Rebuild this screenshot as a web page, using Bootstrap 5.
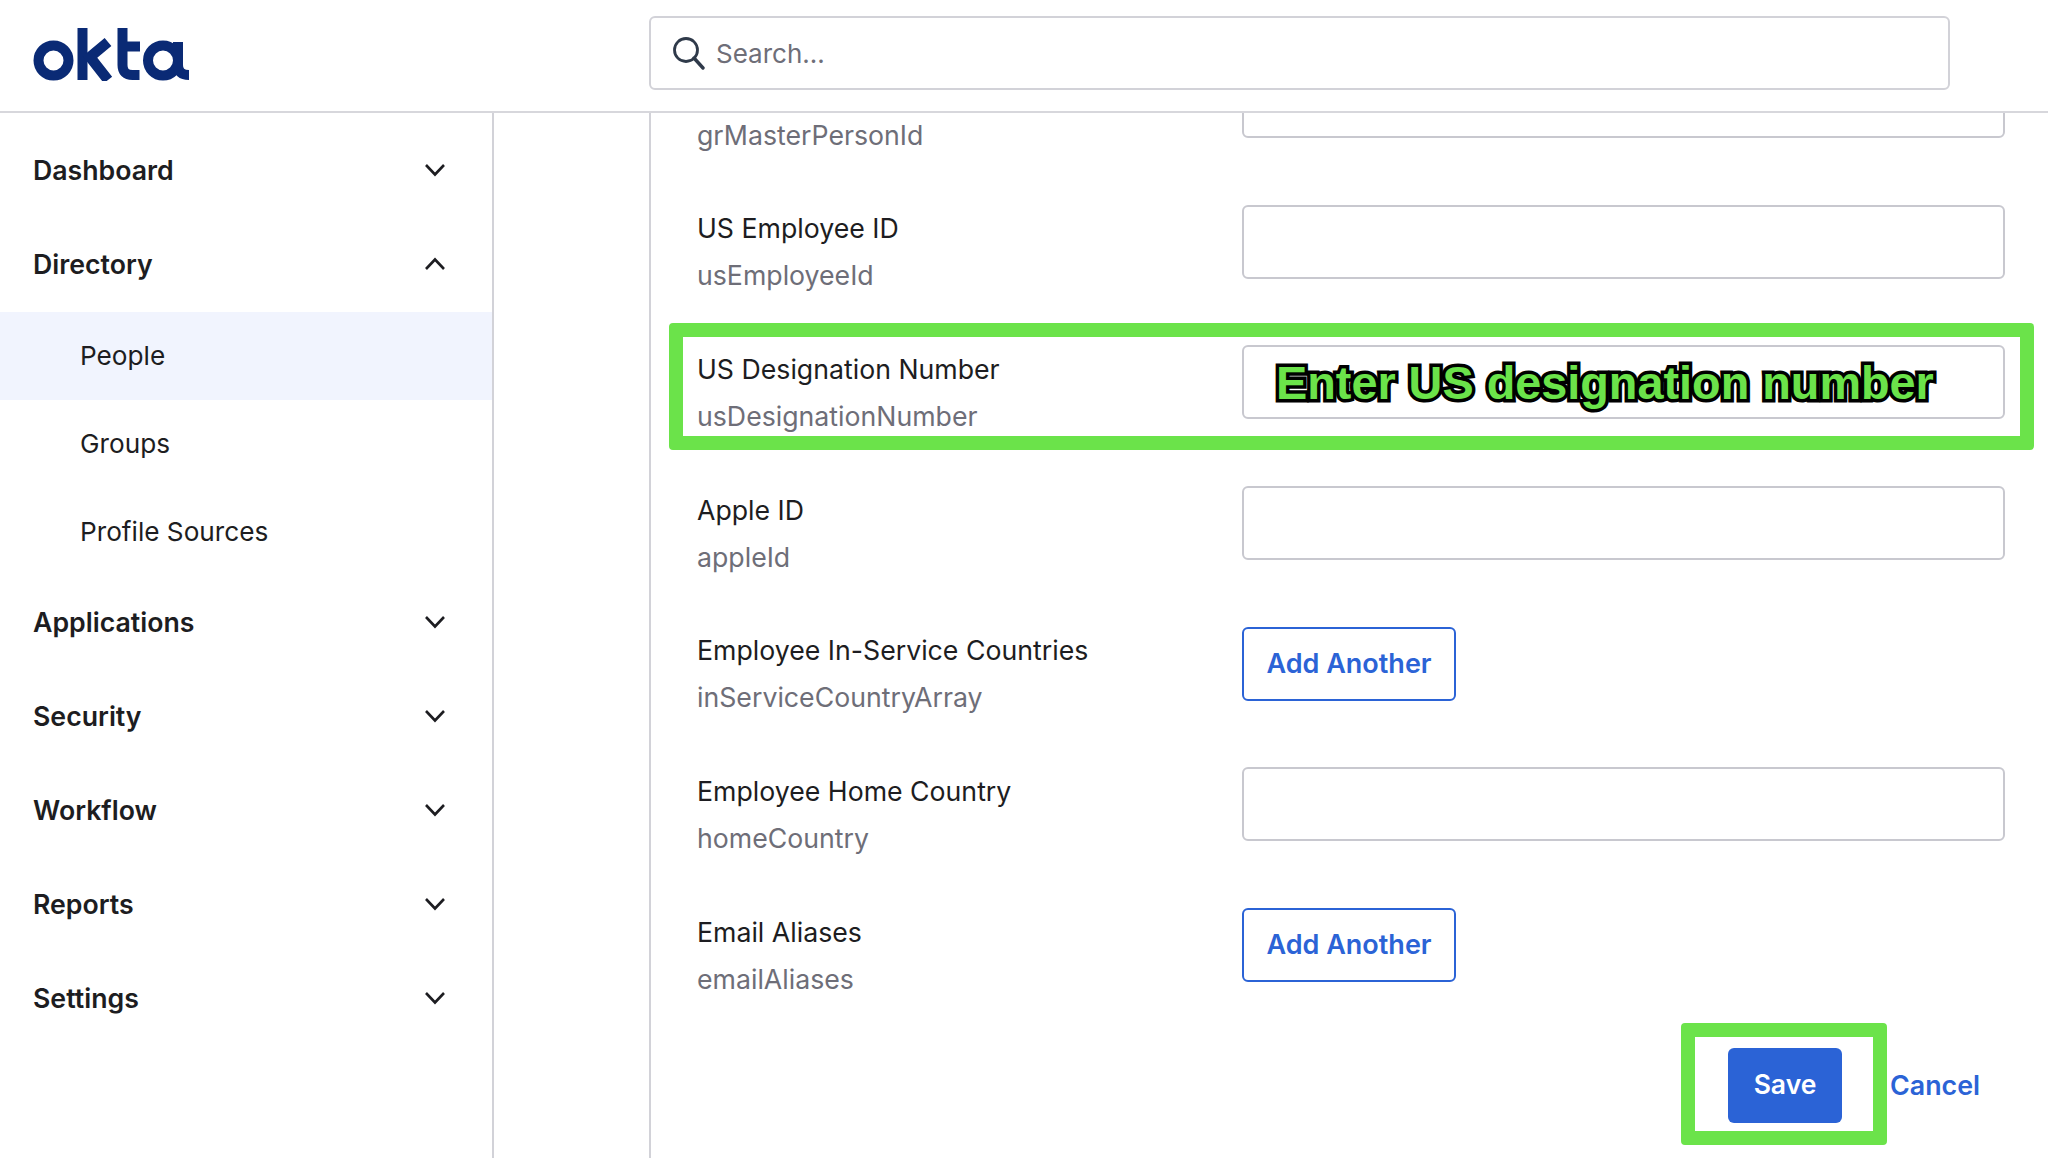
<!DOCTYPE html>
<html lang="en">
<head>
  <meta charset="UTF-8">
  <meta name="viewport" content="width=device-width, initial-scale=1.0">
  <title>Okta Admin - Profile</title>
  <link href="https://cdn.jsdelivr.net/npm/bootstrap@5.3.2/dist/css/bootstrap.min.css" rel="stylesheet">
  <style>
    body {
      font-family: Inter, 'Liberation Sans', sans-serif;
      color: #1d1d21;
      height: 1158px;
      overflow: hidden;
      background: #fff;
    }

    /* top bar */
    .top-bar {
      height: 113px;
      border-bottom: 2px solid #d7d7dc;
    }
    .logo-cell {
      width: 649px;
      padding-left: 33px;
    }
    .logo-cell svg { display: block; margin-top: -2px; }
    .search-box {
      width: 1301px;
      height: 74px;
      margin-top: 16px;
      border: 2px solid #d2d2d8;
      border-radius: 6px;
      padding-left: 22px;
      gap: 11px;
      color: #6e6e78;
      font-size: 26px;
    }

    /* sidebar */
    .page-body { height: 1045px; }
    .side-nav {
      width: 494px;
      padding-top: 11px;
      border-right: 2px solid #d2d2d8;
      flex-shrink: 0;
    }
    .side-head {
      height: 94px;
      padding: 0 45px 1px 33px;
      font-size: 26.700px;
      font-weight: 600;
      color: #1d1d21;
      text-decoration: none;
    }
    .side-head svg { margin-top: -1px; }
    .side-sub {
      height: 88px;
      padding: 0 0 1px 80px;
      font-size: 26.200px;
      color: #1d1d21;
      text-decoration: none;
    }
    .side-sub.is-current { background: #f1f4fe; }

    .gutter-col { width: 155px; flex-shrink: 0; }

    /* form */
    .form-pane {
      width: 1399px;
      border-left: 2px solid #d2d2d8;
      padding-left: 46px;
      overflow: hidden;
    }
    .form-stack { margin-top: -49px; }
    .form-line { height: 140.700px; }
    .label-cell { width: 545px; padding-top: 6.500px; flex-shrink: 0; }
    .field-name { font-size: 26.700px; line-height: 34px; }
    .field-var { font-size: 26.700px; line-height: 34px; margin-top: 13px; color: #6e6e78; }
    .form-control.field-input {
      width: 763px;
      height: 74px;
      border: 2px solid #c8c8cf;
      border-radius: 6px;
    }
    .btn.add-btn {
      width: 214px;
      height: 74px;
      border: 2px solid #2b63d6;
      border-radius: 6px;
      color: #2b63d6;
      font-size: 27px;
      font-weight: 600;
      padding: 0;
    }
    .btn.save-btn {
      width: 114px;
      height: 75px;
      background: #2b63d6;
      border: 0;
      border-radius: 6px;
      font-size: 26.500px;
      font-weight: 600;
      padding: 0;
    }
    .cancel-link {
      color: #2b63d6;
      font-size: 26.800px;
      font-weight: 600;
      text-decoration: none;
      margin-left: 48px;
    }
    .form-foot { padding-right: 68px; margin-top: -1px; }

    /* green annotations drawn over the screenshot */
    .mark-box {
      position: absolute;
      border: 14px solid #6be34a;
      border-radius: 4px;
      pointer-events: none;
    }
    .mark-row { left: -28px; top: -22px; width: 1365px; height: 127px; }
    .mark-save { left: -47px; top: -25px; width: 206px; height: 122px; }
    .mark-text {
      position: absolute;
      left: 34px;
      top: 10px;
      font-family: 'Liberation Sans', sans-serif;
      font-weight: 700;
      font-size: 46.800px;
      line-height: 56px;
      white-space: nowrap;
      color: #6be34a;
      -webkit-text-stroke: 7px #000;
      paint-order: stroke fill;
    }
  </style>
</head>
<body>
  <svg width="0" height="0" class="position-absolute">
    <symbol id="chev-down" viewBox="0 0 24 14"><path d="M3 2l9 9.500L21 2" fill="none" stroke="#1d1d21" stroke-width="2.600"/></symbol>
    <symbol id="chev-up" viewBox="0 0 24 14"><path d="M3 12l9-9.500L21 12" fill="none" stroke="#1d1d21" stroke-width="2.600"/></symbol>
  </svg>

  <header class="top-bar d-flex align-items-start">
    <div class="logo-cell align-self-center">
      <svg width="157" height="53" viewBox="33 27 157 53" aria-label="okta">
        <g fill="none" stroke="#0a2a75" stroke-width="10">
          <circle cx="53.500" cy="59.500" r="15"/>
          <path d="M82.500 27v52"/>
          <path d="M108 41L90 56l18 23" stroke-width="10.500"/>
          <path d="M122.500 27v37q0 10 10 10h7"/>
          <path d="M118 45.500h22"/>
          <circle cx="163" cy="59.500" r="15"/>
          <path d="M178 41v23q0 10 11 10"/>
        </g>
      </svg>
    </div>
    <div class="search-box d-flex align-items-center">
      <svg width="32" height="33" viewBox="0 0 32 33"><circle cx="13" cy="13" r="11.500" fill="none" stroke="#2f3a4a" stroke-width="2.800"/><path d="M21 21l9 10" stroke="#2f3a4a" stroke-width="3.400" stroke-linecap="round"/></svg>
      <span>Search...</span>
    </div>
  </header>

  <div class="page-body d-flex">
    <nav class="side-nav">
      <a href="#" class="side-head d-flex justify-content-between align-items-center">Dashboard <svg width="24" height="14"><use href="#chev-down"/></svg></a>
      <a href="#" class="side-head d-flex justify-content-between align-items-center">Directory <svg width="24" height="14"><use href="#chev-up"/></svg></a>
      <a href="#" class="side-sub is-current d-flex align-items-center">People</a>
      <a href="#" class="side-sub d-flex align-items-center">Groups</a>
      <a href="#" class="side-sub d-flex align-items-center">Profile Sources</a>
      <a href="#" class="side-head d-flex justify-content-between align-items-center">Applications <svg width="24" height="14"><use href="#chev-down"/></svg></a>
      <a href="#" class="side-head d-flex justify-content-between align-items-center">Security <svg width="24" height="14"><use href="#chev-down"/></svg></a>
      <a href="#" class="side-head d-flex justify-content-between align-items-center">Workflow <svg width="24" height="14"><use href="#chev-down"/></svg></a>
      <a href="#" class="side-head d-flex justify-content-between align-items-center">Reports <svg width="24" height="14"><use href="#chev-down"/></svg></a>
      <a href="#" class="side-head d-flex justify-content-between align-items-center">Settings <svg width="24" height="14"><use href="#chev-down"/></svg></a>
    </nav>
    <div class="gutter-col"></div>

    <main class="form-pane">
      <form class="form-stack">
        <div class="form-line d-flex align-items-start">
          <div class="label-cell"><div class="field-name">&nbsp;</div><div class="field-var">grMasterPersonId</div></div>
          <input type="text" class="form-control field-input">
        </div>
        <div class="form-line d-flex align-items-start">
          <div class="label-cell"><div class="field-name">US Employee ID</div><div class="field-var">usEmployeeId</div></div>
          <input type="text" class="form-control field-input">
        </div>
        <div class="form-line d-flex align-items-start position-relative">
          <div class="label-cell"><div class="field-name">US Designation Number</div><div class="field-var">usDesignationNumber</div></div>
          <div class="position-relative">
            <input type="text" class="form-control field-input">
            <div class="mark-text">Enter US designation number</div>
          </div>
          <div class="mark-box mark-row"></div>
        </div>
        <div class="form-line d-flex align-items-start">
          <div class="label-cell"><div class="field-name">Apple ID</div><div class="field-var">appleId</div></div>
          <input type="text" class="form-control field-input">
        </div>
        <div class="form-line d-flex align-items-start">
          <div class="label-cell"><div class="field-name">Employee In-Service Countries</div><div class="field-var">inServiceCountryArray</div></div>
          <button type="button" class="btn add-btn">Add Another</button>
        </div>
        <div class="form-line d-flex align-items-start">
          <div class="label-cell"><div class="field-name">Employee Home Country</div><div class="field-var">homeCountry</div></div>
          <input type="text" class="form-control field-input">
        </div>
        <div class="form-line d-flex align-items-start">
          <div class="label-cell"><div class="field-name">Email Aliases</div><div class="field-var">emailAliases</div></div>
          <button type="button" class="btn add-btn">Add Another</button>
        </div>
        <div class="form-foot d-flex justify-content-end align-items-center">
          <div class="position-relative">
            <button type="button" class="btn btn-primary save-btn">Save</button>
            <div class="mark-box mark-save"></div>
          </div>
          <a href="#" class="cancel-link">Cancel</a>
        </div>
      </form>
    </main>
  </div>

  <script src="https://cdn.jsdelivr.net/npm/bootstrap@5.3.2/dist/js/bootstrap.bundle.min.js"></script>
</body>
</html>
